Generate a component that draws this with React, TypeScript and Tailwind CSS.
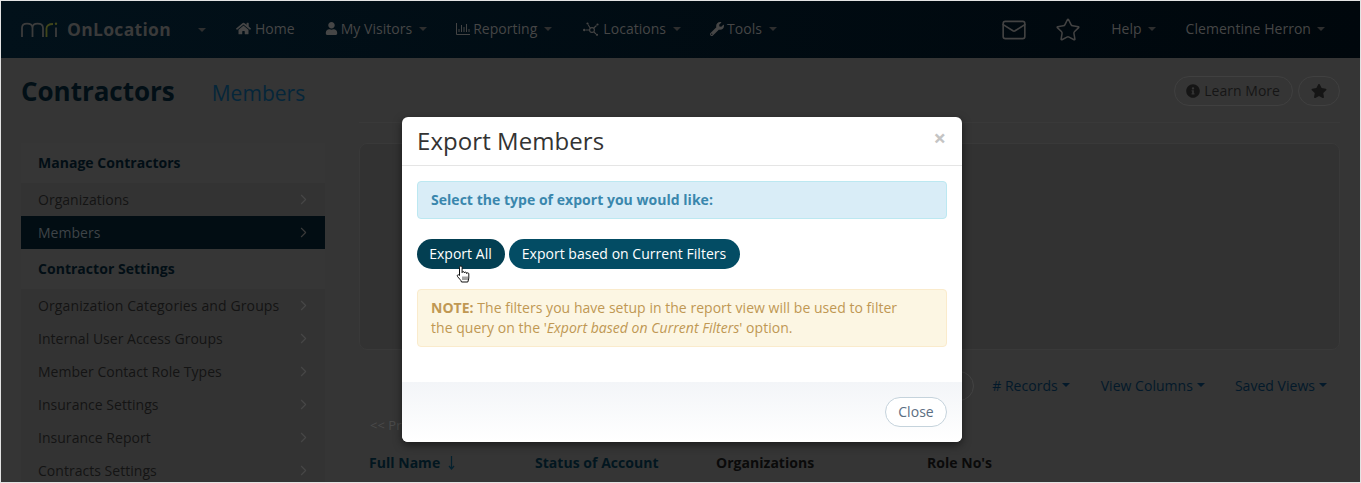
import React from "react";
import { FaHome, FaUser, FaWrench, FaInfoCircle, FaStar } from "react-icons/fa";
import { Mail, Star, ChevronRight } from "lucide-react";

const Caret = ({ className = "" }: { className?: string }) => (
  <span className={`inline-block h-0 w-0 border-x-[4px] border-t-[4px] border-x-transparent ${className}`} />
);

const Logo = () => (
  <svg width="37" height="15" viewBox="0 0 37 15" fill="none" strokeWidth="1.8" className="shrink-0">
    <path d="M1 15V6C1 3 3 1.700 6 1.700S11.500 3 11.500 6V15M11.500 6C11.500 3 13.500 1.700 16.500 1.700S22 3 22 6V15" stroke="#3c3c3c" />
    <path d="M25.500 15V6.500C25.500 3.500 27.500 2 32 2" stroke="#41461a" />
    <path d="M35 5.500V15" stroke="#3c3c3c" />
    <circle cx="35" cy="1.800" r="1.200" fill="#41461a" />
  </svg>
);

const ReportIcon = () => (
  <svg width="14" height="12" viewBox="0 0 14 12" fill="none" stroke="#444" strokeWidth="1" className="mr-[3px]">
    <path d="M.5 0v11.500H14M3 9V6M5.500 9V2M8 9V4M10.500 9V1M13 9V6" />
  </svg>
);

const HubIcon = () => (
  <svg width="17" height="14" viewBox="0 0 17 14" fill="none" stroke="#444" strokeWidth="1.100" className="mr-[3px]">
    <circle cx="9" cy="8" r="2.400" />
    <path d="M7.300 6.300 5 2.500M6.600 8H3M10.800 9.800 13 12M10.800 6 13.500 3.500" />
    <circle cx="1.300" cy="8" r="1.300" fill="#444" stroke="none" />
    <circle cx="4.500" cy="1.500" r="1.100" fill="#444" stroke="none" />
    <circle cx="14.500" cy="2.500" r="1.100" fill="#444" stroke="none" />
    <circle cx="14" cy="12.800" r="1.100" fill="#444" stroke="none" />
  </svg>
);

const HandCursor = () => (
  <svg width="15" height="18" viewBox="0 0 15 18" fill="#fff" stroke="#111" strokeWidth="1" className="absolute left-[39px] top-[26px]">
    <path d="M3.500 10.500V2.300a1.300 1.300 0 0 1 2.600 0V7.600c0-1.300 2.300-1.300 2.300 0v.4c0-1.200 2.200-1.200 2.200.1v.5c0-1.100 2.200-1.100 2.200.2V13c0 1.500-.8 2.500-1 4H5.500C5 15 3 13.500 1.500 11.500c-.9-1.300.8-2.600 2-1z" />
    <path d="M7 11.500v3.500M9 11.500v3.500M11 11.500v3.500" strokeWidth="0.800" />
  </svg>
);

const SortArrow = () => (
  <svg width="7" height="14" viewBox="0 0 7 14" fill="none" stroke="#04212f" strokeWidth="1.200" className="ml-[8px] inline-block align-[-2px]">
    <path d="M3.500 0v13M1 10l2.500 3L6 10" />
  </svg>
);

const NavItem = ({ icon, label, className = "", gap = "ml-[7px]" }: { icon?: React.ReactNode; label: string; className?: string; gap?: string }) => (
  <div className={`flex items-center pb-[2px] ${className}`}>
    {icon}
    <span>{label}</span>
    <Caret className={`border-t-[#2e2e2e] ${gap}`} />
  </div>
);

const SideItem = ({ label, active, className = "" }: { label: string; active?: boolean; className?: string }) => (
  <div className={`flex h-[33px] items-center justify-between pl-[17px] pr-[13px] text-[14px] ${active ? "bg-[#020d13] text-[#3f4448]" : "bg-[#333333] text-[#141414]"} ${className}`}>
    <span>{label}</span>
    <ChevronRight size={17} strokeWidth={1.6} className={active ? "text-[#3a3a3a]" : "text-[#474747]"} />
  </div>
);

const SideHeader = ({ label }: { label: string }) => (
  <div className="flex h-[40px] items-center pb-[2px] pl-[17px] text-[14px] font-bold text-[#020e15]">{label}</div>
);

export default function App() {
  return (
    <div className="relative h-[483px] w-[1361px] overflow-hidden border border-[#e3e3e3] bg-[#353535] font-['Open_Sans','Noto_Sans',sans-serif] tracking-[0.03px]">
      {/* Navigation */}
      <header className="flex h-[57px] items-center bg-gradient-to-r from-[#02111a] to-[#00070c] text-[14px] text-[#464646]">
        <div className="ml-[20px] flex w-[215px] items-center">
          <Logo />
          <span className="ml-[9px] text-[17.500px] font-bold tracking-[0.3px] text-[#3a3a3a]">OnLocation</span>
          <Caret className="ml-[27px] border-t-[#2f2f2f]" />
        </div>
        <div className="flex items-center pb-[2px]">
          <FaHome size={15} className="mr-[4px]" />
          <span>Home</span>
        </div>
        <NavItem className="ml-[30px]" icon={<FaUser size={13} className="mr-[3px]" />} label="My Visitors" />
        <NavItem className="ml-[29px]" icon={<ReportIcon />} label="Reporting" />
        <NavItem className="ml-[31px]" icon={<HubIcon />} label="Locations" />
        <NavItem className="ml-[29px]" icon={<FaWrench size={14} className="mr-[3px]" />} label="Tools" />
        <div className="ml-auto flex items-center pr-[35px]">
          <Mail size={26} strokeWidth={1.5} className="text-[#434343]" />
          <Star size={26} strokeWidth={1.400} className="ml-[28px] text-[#434343]" />
          <NavItem className="ml-[30px]" gap="ml-[6px]" label="Help" />
          <NavItem className="ml-[30px]" gap="ml-[6px]" label="Clementine Herron" />
        </div>
      </header>

      {/* Page title */}
      <div className="flex h-[65px] items-center justify-between px-[20px]">
        <div className="flex items-baseline pt-[2px]">
          <h1 className="text-[26px] font-bold tracking-[-0.03px] text-[#020f16]">Contractors</h1>
          <h2 className="ml-[37px] text-[21px] text-[#05263a]">Members</h2>
        </div>
        <div className="flex items-center gap-[5px] text-[14px] text-[#151515]">
          <div className="flex h-[30px] items-center rounded-full border border-[#404040] pl-[11px] pr-[12px]">
            <FaInfoCircle size={14} className="mr-[4px]" />
            <span>Learn More</span>
          </div>
          <div className="flex h-[30px] w-[42px] items-center justify-center rounded-full border border-[#404040]">
            <FaStar size={16} />
          </div>
        </div>
      </div>

      {/* Body */}
      <div className="flex items-start px-[20px] pt-[20px]">
        <aside className="w-[304px] shrink-0 bg-[#363636]">
          <SideHeader label="Manage Contractors" />
          <SideItem label="Organizations" />
          <SideItem label="Members" active />
          <SideHeader label="Contractor Settings" />
          <SideItem label="Organization Categories and Groups" className="tracking-[0.12px]" />
          <SideItem label="Internal User Access Groups" />
          <SideItem label="Member Contact Role Types" />
          <SideItem label="Insurance Settings" />
          <SideItem label="Insurance Report" />
          <SideItem label="Contracts Settings" />
        </aside>

        <main className="-mt-[21px] ml-[34px] min-w-0 flex-1 border-t border-[#393939] pt-[20px]">
          <div className="h-[207px] rounded-[8px] border border-[#393939] bg-[#323232]" />
          <div className="mt-[21px] flex h-[30px] items-center justify-end pr-[13px] text-[14px] text-[#03192a]">
            <div className="h-[30px] w-[40px] rounded-r-full border border-[#434343]" />
            <span className="ml-[18px] pb-[2px]">#&nbsp;Records</span>
            <Caret className="mb-[2px] ml-[4px] border-t-[#03192a]" />
            <span className="ml-[31px] pb-[2px]">View Columns</span>
            <Caret className="mb-[2px] ml-[4px] border-t-[#03192a]" />
            <span className="ml-[30px] pb-[2px]">Saved Views</span>
            <Caret className="mb-[2px] ml-[4px] border-t-[#03192a]" />
          </div>
          <div className="mt-[14px] pl-[11px] text-[13px] leading-[20px] text-[#4a4a4a]">&lt;&lt; Previous</div>
          <div className="relative mt-[17px] flex pl-[10px] text-[14px] font-bold">
            <span className="w-[166px] text-[#02161f]">Full Name<SortArrow /></span>
            <span className="w-[181px] text-[#02161f]">Status of Account</span>
            <span className="w-[211px] text-[#0a0a0a]">Organizations</span>
            <span className="text-[#0a0a0a]">Role No's</span>
          </div>
        </main>
      </div>

      {/* Modal */}
      <div className="absolute left-[401px] top-[116px] flex h-[325px] w-[560px] flex-col rounded-[6px] bg-white shadow-[0_3px_9px_rgba(0,0,0,0.5)]">
        <div className="flex h-[49px] items-center justify-between border-b border-[#e5e5e5] pb-[2px] pl-[15px] pr-[16px]">
          <h3 className="text-[24px] leading-[33px] tracking-[0.06px] text-[#333]">Export Members</h3>
          <span className="-mt-[6px] text-[22px] font-bold leading-none text-[#c4c4c4]">×</span>
        </div>
        <div className="flex-1 px-[15px] pt-[15px]">
          <div className="flex h-[38px] items-center rounded-[4px] border border-[#bce8f1] bg-[#d9edf7] pb-[2px] pl-[13px] text-[14px] font-bold text-[#3a87ad]">
            Select the type of export you would like:
          </div>
          <div className="relative mt-[20px] flex gap-[4px] text-[14px] text-white">
            <button className="h-[30px] w-[88px] rounded-full bg-[#033f52] pb-[2px] pr-[1px]">Export All</button>
            <button className="h-[30px] w-[231px] rounded-full bg-[#034c64] pb-[2px] pr-[1px]">Export based on Current Filters</button>
            <HandCursor />
          </div>
          <div className="mt-[20px] h-[58px] rounded-[4px] border border-[#faebcc] bg-[#fcf6e3] py-[8px] pl-[13px] text-[14px] leading-[20px] text-[#c09853]">
            <b>NOTE:</b> The filters you have setup in the report view will be used to filter<br />
            the query on the '<i>Export based on Current Filters</i>' option.
          </div>
        </div>
        <div className="flex h-[60px] items-start justify-end rounded-b-[6px] bg-gradient-to-b from-[#f3f5f8] to-white pr-[15px] pt-[15px]">
          <button className="h-[30px] w-[62px] rounded-full border border-[#c5d3dc] bg-white pb-[2px] text-[14px] text-[#5b6e82]">Close</button>
        </div>
      </div>
    </div>
  );
}
